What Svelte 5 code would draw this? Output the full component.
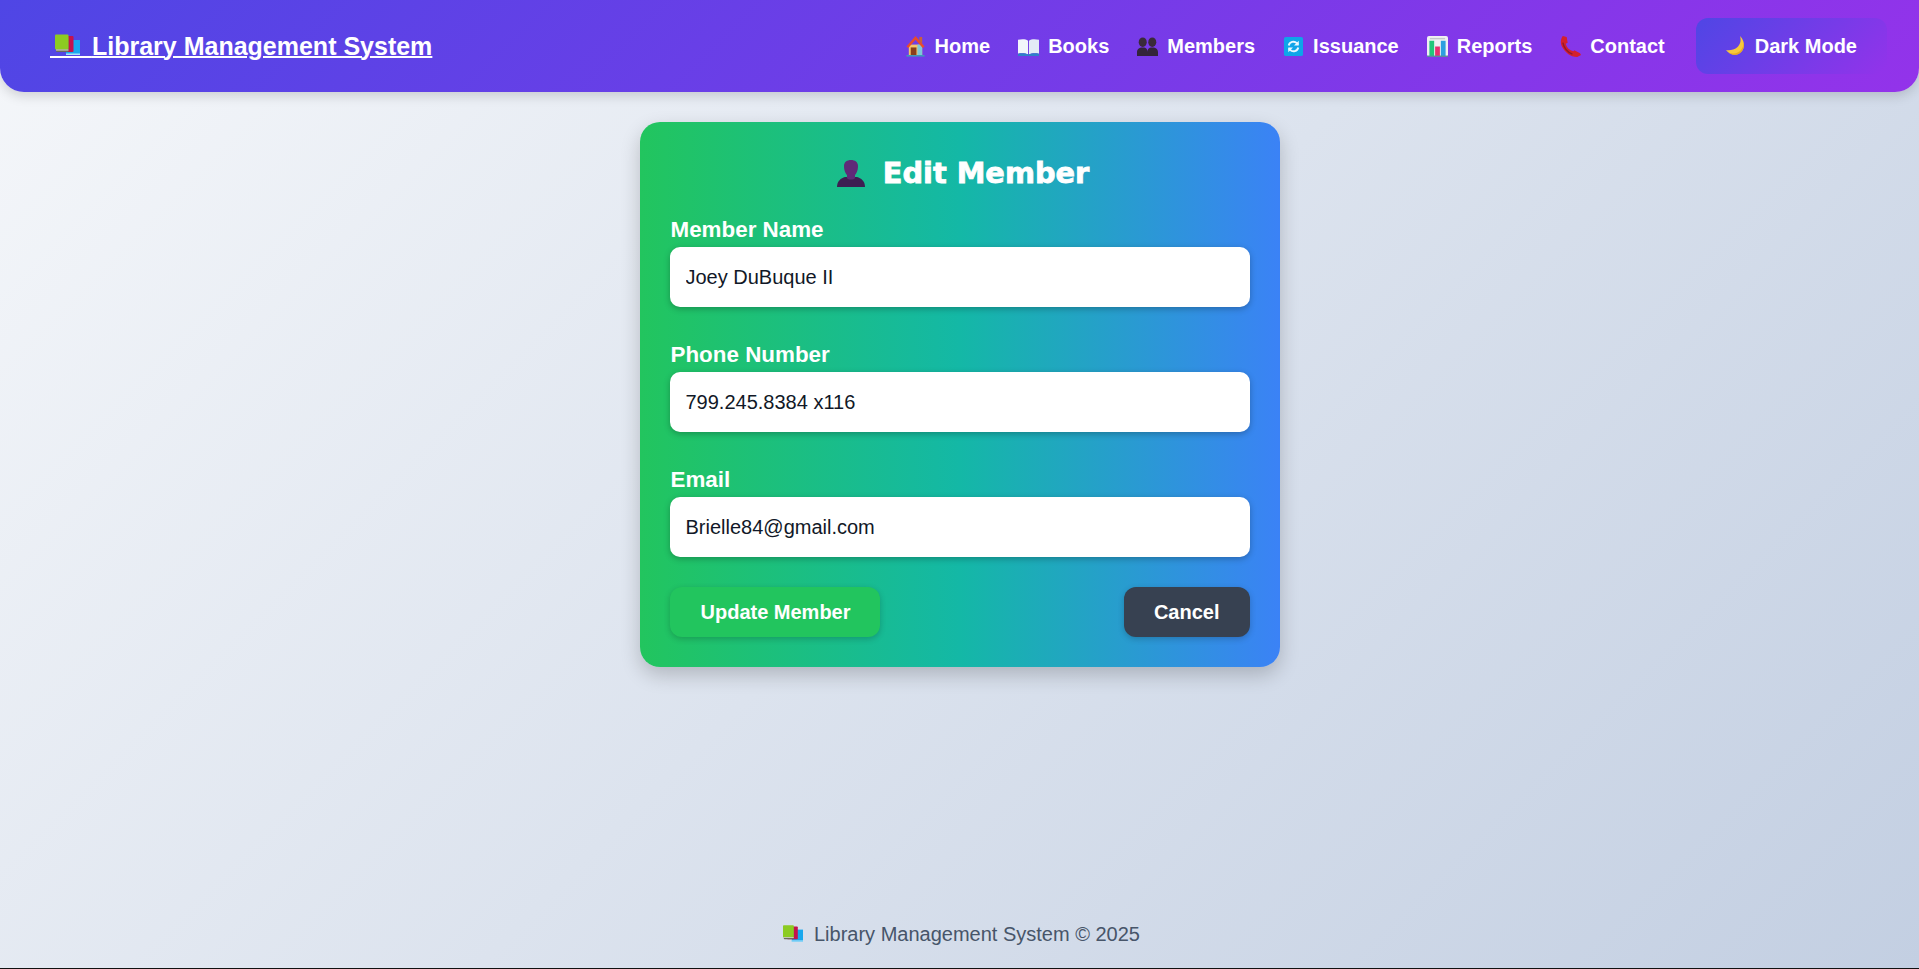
<script>
  let name = $state('Joey DuBuque II');
  let phone = $state('799.245.8384 x116');
  let email = $state('Brielle84@gmail.com');

  const links = ['Home', 'Books', 'Members', 'Issuance', 'Reports', 'Contact'];
</script>

{#snippet books(cls)}
  <svg class={cls} viewBox="0 0 25 25" aria-hidden="true">
    <rect x="11" y="7" width="14" height="15" fill="#18a8ee" />
    <rect x="11" y="20.500" width="14" height="1.500" fill="#a8e2fa" />
    <rect x="5" y="3" width="13.500" height="16" rx="1" fill="#c4124e" />
    <rect x="1" y="4" width="12.500" height="15" rx="1" fill="#6b6a5e" />
    <rect x="0" y="1.500" width="13.500" height="15" rx="1" fill="#8ccb22" />
    <rect x="1" y="16.500" width="12.500" height="1" fill="#d9d9cf" />
  </svg>
{/snippet}

{#snippet icon(link)}
  <svg class="nav-icon" viewBox="0 0 22 22" aria-hidden="true">
    {#if link === 'Home'}
      <path d="M4 9h14v11H4z" fill="#f4c46a" />
      <path d="M13 9h5v11h-5z" fill="#7fc8d8" />
      <path d="M11 0 1.500 11l2 1.500L11 4l7.500 8.500 2-1.500z" fill="#ea4a2c" />
      <path d="M15 1h3v7l-3-3z" fill="#c9603a" />
      <rect x="6" y="12" width="6" height="8" fill="#8a3f1c" />
      <rect x="1.500" y="20" width="19" height="1.500" fill="#3aa0b8" />
    {:else if link === 'Books'}
      <path d="M0 4c4-1 8-1 10.500 1v14.500C8 18 4 18 0 18.500z" fill="#f2f6fb" />
      <path d="M22 4c-4-1-8-1-10.500 1v14.500c2.500-1.500 6.500-1.500 10.500-1z" fill="#e3ecf6" />
      <path d="M0 18.500c4-.5 8-.5 11 1 3-1.500 7-1.500 11-1V21H0z" fill="#2f7fc8" />
    {:else if link === 'Members'}
      <ellipse cx="6" cy="6.500" rx="4.200" ry="5" fill="#3a2a3a" />
      <ellipse cx="16" cy="6.500" rx="4.200" ry="5" fill="#3a2a3a" />
      <path d="M0 21v-4c0-3 2-5 6-5s5 2 5 5c0-3 1-5 5-5s6 2 6 5v4z" fill="#33243a" />
    {:else if link === 'Issuance'}
      <rect x="1" y="1" width="20" height="20" rx="2" fill="#0ea5e9" />
      <path d="M6 10a5 5 0 0 1 8.500-2.500L16 9" fill="none" stroke="#e6f7ff" stroke-width="2" />
      <path d="M16.500 5v5h-5z" fill="#e6f7ff" />
      <path d="M16 12a5 5 0 0 1-8.500 2.500L6 13" fill="none" stroke="#e6f7ff" stroke-width="2" />
      <path d="M5.500 17v-5h5z" fill="#e6f7ff" />
    {:else if link === 'Reports'}
      <rect x="0" y="0" width="22" height="22" rx="2" fill="#f0f0f2" />
      <rect x="2.500" y="5" width="5" height="17" fill="#22c77a" />
      <rect x="8.500" y="11" width="5" height="11" fill="#e8306e" />
      <rect x="14.500" y="5" width="5" height="17" fill="#2d9fe0" />
      <rect x="3" y="2" width="16" height="1.500" fill="#c4c8cc" />
      <rect x="0" y="20.500" width="22" height="1.500" fill="#5a8aa0" />
    {:else if link === 'Contact'}
      <path d="M3 0 7 1l1 6-2 1c1 4 4 7 8 8l1-1 6 3 1 2-4 2C11 22 5 17 2 11 0 7 1 2 3 0z" fill="#d4202c" />
      <path d="M3 7c1 5 5 10 10 12" fill="none" stroke="#8f1a2a" stroke-width="1.500" />
    {/if}
  </svg>
{/snippet}

<div class="page">
  <nav class="navbar">
    <a class="logo" href="#top">
      {@render books('logo-icon')}<span class="logo-gap">&nbsp;</span>Library Management System
    </a>
    <div class="nav-links">
      {#each links as link}
        <a class="nav-link" href="#top">{@render icon(link)}{link}</a>
      {/each}
      <button class="dark-btn" type="button">
        <svg class="nav-icon moon" viewBox="0 0 20 20" aria-hidden="true">
          <path d="M14 0c1.500 5 0 9-3 11.500C8 14 4 14.500 0 14c3 4 8 6 12.500 4C19 15 20 6 14 0z" fill="#f6c83c" />
          <path d="M17 5c1 5-1 9-4.500 11C9 18 5 18 2.500 16.500c3 2.500 7 3 10 1.500C17 16 19 10 17 5z" fill="#e8a820" />
        </svg>
        Dark Mode
      </button>
    </div>
  </nav>

  <main>
    <form class="card" onsubmit={(e) => e.preventDefault()}>
      <h2>
        <svg class="person" viewBox="0 0 28 27" aria-hidden="true">
          <path d="M0 27c0-6 4-9 8-10h12c4 1 8 4 8 10z" fill="#3d1f52" />
          <path d="M7 6c0-4 3-6 7-6s7 2 7 6c0 5-2 8-3 9v3c-1 2-7 2-8 0v-3c-1-1-3-4-3-9z" fill="#5f2a78" />
        </svg>
        <span>Edit Member</span>
      </h2>

      <label for="name">Member Name</label>
      <input id="name" type="text" bind:value={name} />

      <label for="phone">Phone Number</label>
      <input id="phone" type="text" bind:value={phone} />

      <label for="email">Email</label>
      <input id="email" type="email" bind:value={email} />

      <div class="actions">
        <button class="update" type="submit">Update Member</button>
        <button class="cancel" type="button">Cancel</button>
      </div>
    </form>
  </main>

  <footer>
    {@render books('footer-icon')}
    <span>Library Management System © 2025</span>
  </footer>
</div>

<style>
  :global(body) {
    margin: 0;
    font-family: "Liberation Sans", Arial, sans-serif;
  }
  .page {
    box-sizing: border-box;
    height: 969px;
    display: flex;
    flex-direction: column;
    background: linear-gradient(135deg, #f5f7fa, #c3cfe2);
    border-bottom: 1px solid #111;
    overflow: hidden;
  }

  .navbar {
    height: 92px;
    flex-shrink: 0;
    box-sizing: border-box;
    padding: 0 32px 0 50px;
    display: flex;
    align-items: center;
    justify-content: space-between;
    background: linear-gradient(135deg, #4f46e5, #9333ea);
    border-radius: 0 0 24px 24px;
    box-shadow: 0 4px 12px rgba(0, 0, 0, 0.15);
  }
  .logo {
    position: relative;
    color: #fff;
    font-size: 25px;
    font-weight: 700;
    text-decoration: underline;
    text-decoration-thickness: 2px;
    white-space: nowrap;
  }
  .logo-gap {
    letter-spacing: 35px;
  }
  .logo-icon {
    position: absolute;
    left: 5px;
    top: 1px;
    width: 25px;
    height: 25px;
  }
  .nav-links {
    display: flex;
    align-items: center;
    gap: 28px;
  }
  .nav-link {
    display: flex;
    align-items: center;
    gap: 9px;
    color: #fff;
    font-size: 20px;
    font-weight: 700;
    text-decoration: none;
  }
  .nav-icon {
    width: 21px;
    height: 21px;
    flex-shrink: 0;
  }
  .dark-btn {
    display: flex;
    align-items: center;
    gap: 9px;
    height: 56px;
    margin-left: 3px;
    padding: 0 30px;
    border: none;
    border-radius: 12px;
    color: #fff;
    font: 700 20px "Liberation Sans", Arial, sans-serif;
    background: linear-gradient(135deg, #4f46e5, #9333ea);
  }
  .moon {
    width: 20px;
    height: 20px;
  }

  main {
    flex: 1;
    display: flex;
    justify-content: center;
    align-items: flex-start;
    padding-top: 30px;
  }
  .card {
    box-sizing: border-box;
    width: 640px;
    height: 545px;
    padding: 30px;
    display: flex;
    flex-direction: column;
    border-radius: 20px;
    background: linear-gradient(90deg, #22c55e, #14b8a6, #3b82f6);
    box-shadow: 0 8px 20px rgba(0, 0, 0, 0.2);
  }
  h2 {
    margin: 1px 0 23px;
    height: 40px;
    padding-left: 7px;
    display: flex;
    align-items: center;
    justify-content: center;
    gap: 18px;
    color: #fff;
    font: 700 28.800px "DejaVu Sans", sans-serif;
    -webkit-text-stroke: 0.8px #fff;
  }
  .person {
    width: 28px;
    height: 27px;
  }
  label {
    display: block;
    height: 27px;
    line-height: 27px;
    margin-bottom: 4px;
    padding-left: 1px;
    color: #fff;
    font-size: 22.400px;
    font-weight: 700;
  }
  input {
    box-sizing: border-box;
    flex-shrink: 0;
    width: 100%;
    height: 60px;
    margin-bottom: 34px;
    padding: 0 16px;
    border: none;
    border-radius: 10px;
    color: #111827;
    background: #fff;
    font: 20px "Liberation Sans", Arial, sans-serif;
    box-shadow: 0 2px 6px rgba(0, 0, 0, 0.25);
  }
  input:last-of-type {
    margin-bottom: 30px;
  }
  .actions {
    display: flex;
    justify-content: space-between;
  }
  .actions button {
    height: 50px;
    padding: 0 30px;
    border: none;
    border-radius: 12px;
    color: #fff;
    font: 700 20px "Liberation Sans", Arial, sans-serif;
    box-shadow: 0 2px 6px rgba(0, 0, 0, 0.2);
  }
  .actions .update {
    padding: 0 29px 0 31px;
    background: #22c55e;
  }
  .cancel {
    background: #374151;
  }

  footer {
    height: 68px;
    padding-left: 4px;
    display: flex;
    align-items: center;
    justify-content: center;
    gap: 11px;
    color: #475569;
    font-size: 20px;
  }
  .footer-icon {
    width: 20px;
    height: 20px;
  }
</style>
